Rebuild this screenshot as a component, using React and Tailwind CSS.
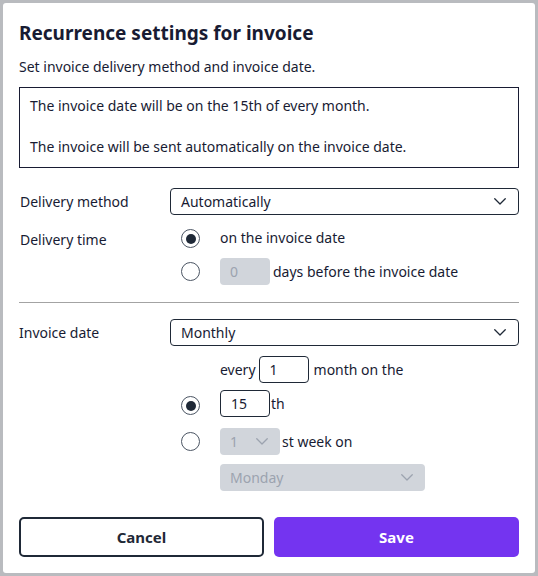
const font = { fontFamily: '"Noto Sans", "Open Sans", sans-serif' };

function Chevron({ muted }) {
  return (
    <svg width="12" height="7" viewBox="0 0 12 7" fill="none" className={muted ? 'text-[#9ca3af]' : 'text-[#1f2937]'}>
      <path d="M0.75 0.75 L6 6 L11.25 0.75" stroke="currentColor" strokeWidth="1.3" strokeLinecap="round" strokeLinejoin="round" />
    </svg>
  );
}

function Radio({ checked }) {
  return (
    <span className="flex h-[19px] w-[19px] items-center justify-center rounded-full border border-[#4b5563] bg-white">
      {checked && <span className="h-[10px] w-[10px] rounded-full bg-[#1f2937]" />}
    </span>
  );
}

function Select({ value, disabled, className = '' }) {
  return (
    <div
      className={[
        'flex h-[27px] items-center justify-between rounded-[4px] pl-[10px] pr-[12px]',
        disabled ? 'bg-[#d1d5db] text-[#9ca3af]' : 'border border-[#1f2937] bg-white',
        className,
      ].join(' ')}
    >
      <span>{value}</span>
      <Chevron muted={disabled} />
    </div>
  );
}

function NumberBox({ value, disabled }) {
  return (
    <div
      className={[
        'flex h-[27px] w-[50px] items-center rounded-[4px] pl-[10px]',
        disabled ? 'bg-[#d1d5db] text-[#9ca3af]' : 'border border-[#1f2937] bg-white',
      ].join(' ')}
    >
      {value}
    </div>
  );
}

export default function App() {
  return (
    <div className="h-[576px] w-[538px] bg-[#b9bbbf] p-[3px]" style={font}>
      <div className="flex h-full flex-col rounded-[3px] bg-white px-4 pt-4 text-[14px] text-[#181b33]">
        <h2 className="h-[28px] text-[19px] font-bold leading-[28px]">Recurrence settings for invoice</h2>
        <p className="mt-[10px] leading-[20px]">Set invoice delivery method and invoice date.</p>

        {/* Summary */}
        <div className="mt-[10px] flex h-[81px] flex-col gap-[21px] border border-[#181b33] px-[10px] pt-[8px] leading-[20px]">
          <p>The invoice date will be on the 15th of every month.</p>
          <p>The invoice will be sent automatically on the invoice date.</p>
        </div>

        {/* Delivery */}
        <div className="mt-[20px] flex items-center">
          <span className="w-[151px] pl-px">Delivery method</span>
          <Select value="Automatically" className="flex-1" />
        </div>
        <div className="mt-[10px] flex">
          <span className="w-[151px] pl-px pt-[5px] leading-[20px]">Delivery time</span>
          <div className="flex flex-col gap-[6px]">
            <div className="flex h-[27px] items-center">
              <span className="ml-[11px] w-[39px]"><Radio checked /></span>
              <span className="-mt-[2px]">on the invoice date</span>
            </div>
            <div className="flex h-[27px] items-center">
              <span className="ml-[11px] w-[39px]"><Radio /></span>
              <NumberBox value="0" disabled />
              <span className="ml-[3px]">days before the invoice date</span>
            </div>
          </div>
        </div>

        <div className="mt-[17px] h-px bg-[#a3a3a3]" />

        {/* Invoice date */}
        <div className="mt-[16px] flex">
          <span className="flex h-[27px] w-[151px] items-center">Invoice date</span>
          <div className="flex flex-1 flex-col">
            <Select value="Monthly" />
            <div className="mt-[10px] flex h-[27px] items-center pl-[50px]">
              <span className="mr-[3px]">every</span>
              <NumberBox value="1" />
              <span className="ml-[5px]">month on the</span>
            </div>
            <div className="mt-[7px] flex h-[27px] items-center">
              <span className="ml-[11px] mt-[4px] w-[39px]"><Radio checked /></span>
              <NumberBox value="15" />
              <span className="ml-px">th</span>
            </div>
            <div className="mt-[11px] flex h-[27px] items-center">
              <span className="ml-[11px] w-[39px]"><Radio /></span>
              <Select value="1" disabled className="w-[60px]" />
              <span className="ml-[2px]">st week on</span>
            </div>
            <div className="mt-[9px] pl-[50px]">
              <Select value="Monday" disabled className="w-[205px]" />
            </div>
          </div>
        </div>

        {/* Actions */}
        <div className="mt-[26px] flex justify-between">
          <button className="h-[40px] w-[245px] rounded-[5px] border-2 border-[#1f2937] bg-white text-[15px] font-bold text-[#1f2937]">
            Cancel
          </button>
          <button className="h-[40px] w-[245px] rounded-[5px] bg-[#7434f0] text-[15px] font-bold text-white">
            Save
          </button>
        </div>
      </div>
    </div>
  );
}
